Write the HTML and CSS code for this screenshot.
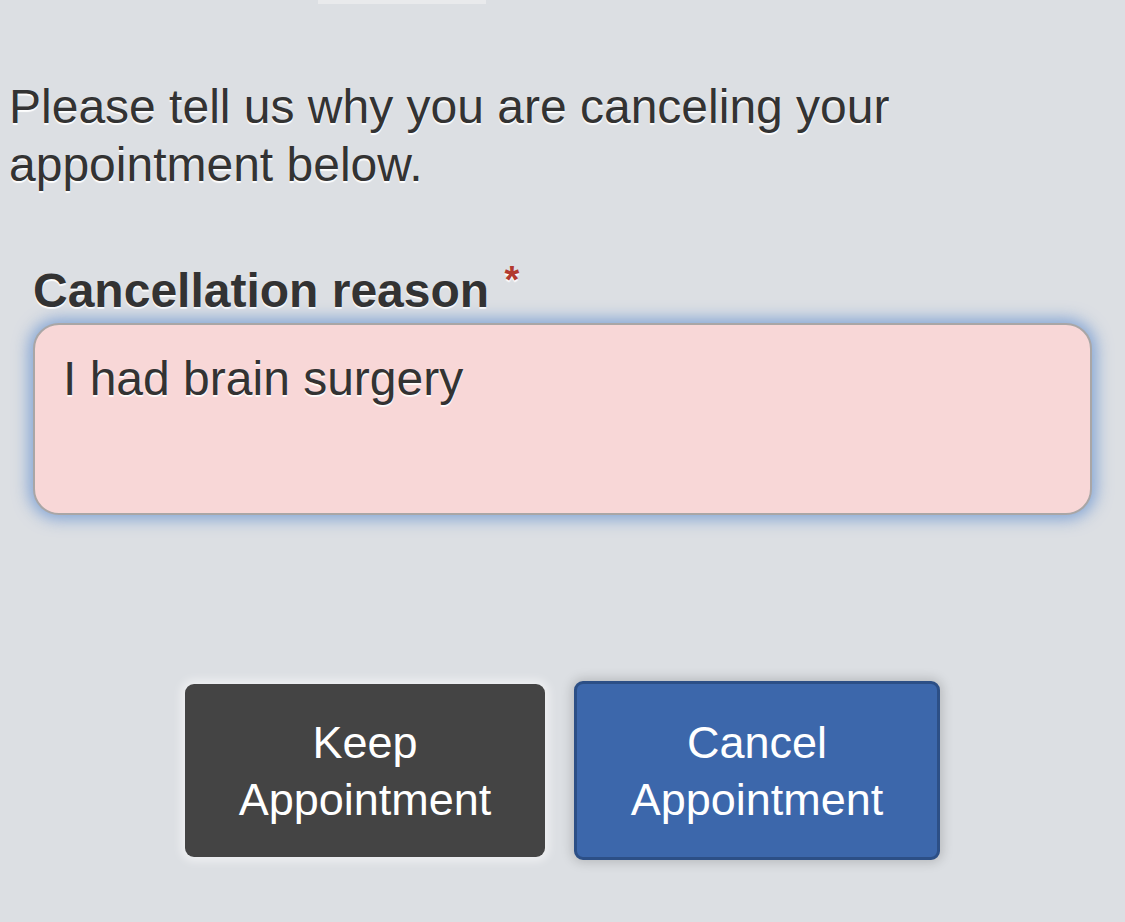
FILE: index.html
```html
<!DOCTYPE html>
<html lang="en">
<head>
<meta charset="utf-8">
<title>Cancel appointment</title>
<link rel="stylesheet" href="styles.css">
</head>
<body>
<div class="page">
  <div class="top-tab"></div>
  <p class="intro">Please tell us why you are canceling your appointment below.</p>
  <form class="form">
    <label class="label" for="reason">Cancellation reason <span class="req">*</span></label>
    <textarea id="reason" class="reason">I had brain surgery</textarea>
    <div class="actions">
      <button type="button" class="btn btn-keep">Keep<br>Appointment</button>
      <button type="button" class="btn btn-cancel">Cancel<br>Appointment</button>
    </div>
  </form>
</div>
</body>
</html>
```
FILE: styles.css
```css
html, body {
  margin: 0;
  padding: 0;
  background: #dcdfe3;
}
body {
  font-family: "Liberation Sans", Arial, Helvetica, sans-serif;
  color: #333;
  width: 1125px;
  height: 922px;
  overflow: hidden;
}
.page {
  display: flex;
  flex-direction: column;
}
.top-tab {
  margin-left: 318px;
  width: 168px;
  height: 4px;
  background: #e9eaec;
}
.intro {
  margin: 74px 0 0 9px;
  font-size: 48px;
  line-height: 58px;
  width: 1000px;
  text-shadow: 0 2px 1px rgba(255, 255, 255, 0.95);
}
.form {
  margin: 0 33px;
  display: flex;
  flex-direction: column;
}
.label {
  margin-top: 68px;
  font-size: 48px;
  line-height: 58px;
  font-weight: bold;
  color: #333;
  text-shadow: 0 2px 1px rgba(255, 255, 255, 0.95);
}
.req {
  color: #b23a2f;
  font-size: 38px;
  vertical-align: 14px;
  line-height: 0;
  font-weight: bold;
  margin-left: 2px;
}
.reason {
  margin-top: 3px;
  box-sizing: border-box;
  height: 192px;
  width: 100%;
  resize: none;
  overflow: hidden;
  background: #f8d7d7;
  border: 2px solid #a9a6a6;
  border-radius: 26px;
  padding: 25px 28px;
  font-family: "Liberation Sans", Arial, Helvetica, sans-serif;
  font-size: 48px;
  line-height: 58px;
  color: #333;
  text-shadow: 0 2px 1px rgba(255, 255, 255, 0.9);
  box-shadow: 0 0 16px 4px rgba(80, 130, 205, 0.65);
  outline: none;
}
.actions {
  margin-top: 166px;
  display: flex;
  justify-content: center;
  align-items: center;
  gap: 29px;
}
.btn {
  box-sizing: content-box;
  width: 360px;
  height: 173px;
  padding: 0;
  border: 0;
  border-radius: 9px;
  color: #fff;
  font-family: "Liberation Sans", Arial, Helvetica, sans-serif;
  font-size: 45px;
  line-height: 57px;
  text-align: center;
}
.btn-keep {
  background: #444444;
  box-shadow: 0 0 10px 4px rgba(255, 255, 255, 0.55);
}
.btn-cancel {
  background: #3c67ab;
  border: 3px solid #2c4f86;
  box-shadow: 0 0 12px 2px rgba(0, 0, 0, 0.18);
}
```
